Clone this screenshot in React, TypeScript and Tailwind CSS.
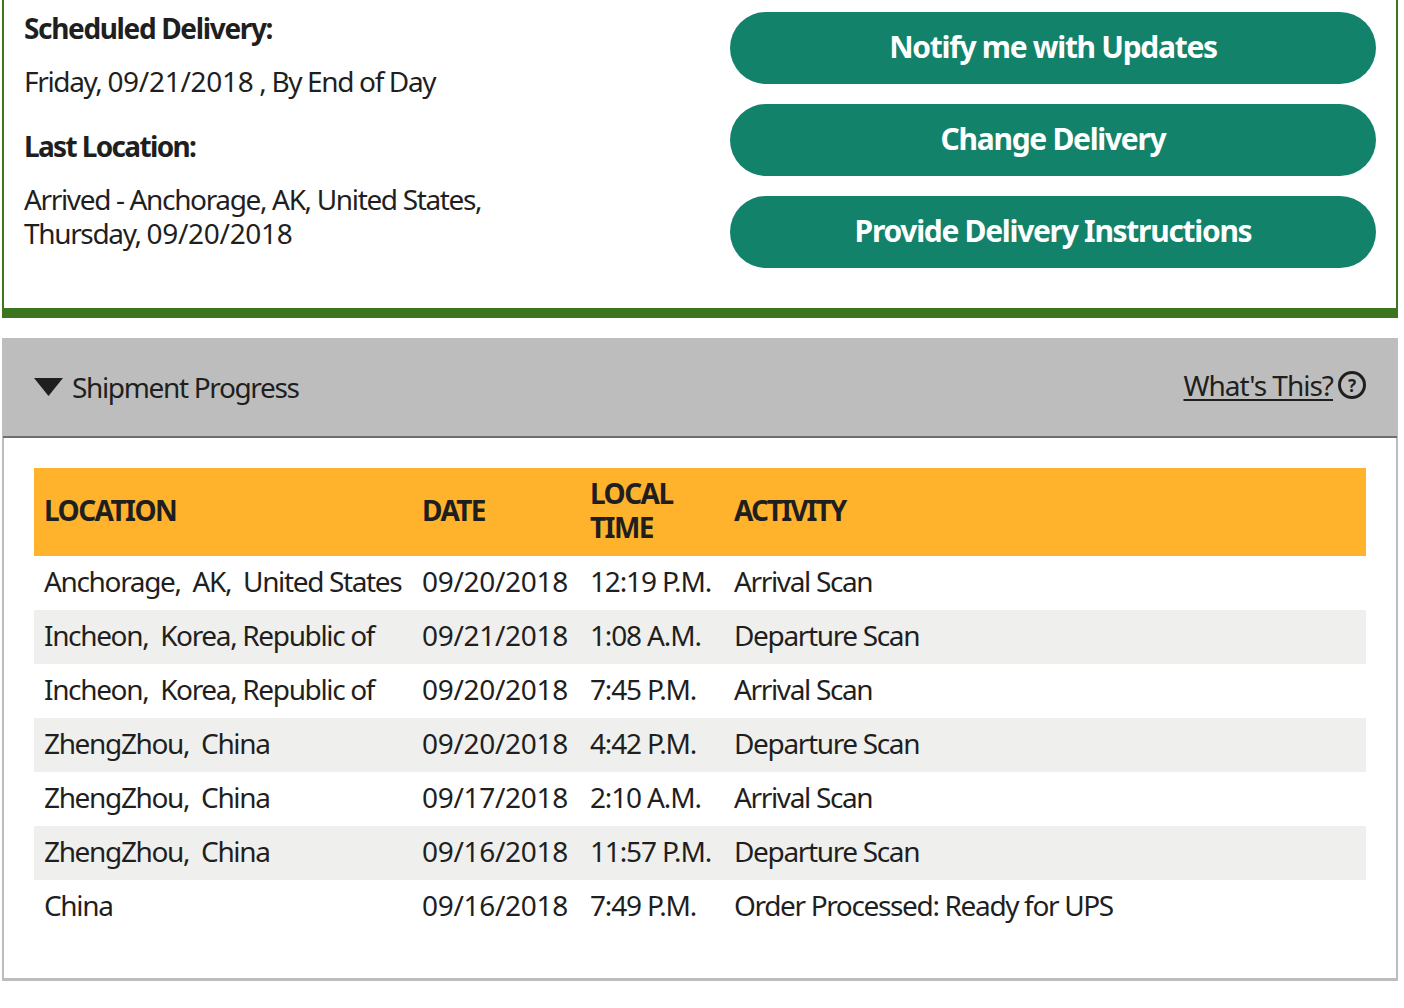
// App.tsx
const rows = [
  ['Anchorage,  AK,  United States', '09/20/2018', '12:19 P.M.', 'Arrival Scan'],
  ['Incheon,  Korea, Republic of', '09/21/2018', '1:08 A.M.', 'Departure Scan'],
  ['Incheon,  Korea, Republic of', '09/20/2018', '7:45 P.M.', 'Arrival Scan'],
  ['ZhengZhou,  China', '09/20/2018', '4:42 P.M.', 'Departure Scan'],
  ['ZhengZhou,  China', '09/17/2018', '2:10 A.M.', 'Arrival Scan'],
  ['ZhengZhou,  China', '09/16/2018', '11:57 P.M.', 'Departure Scan'],
  ['China', '09/16/2018', '7:49 P.M.', 'Order Processed: Ready for UPS'],
]

const buttons = ['Notify me with Updates', 'Change Delivery', 'Provide Delivery Instructions']

export default function App() {
  return (
    <div className="w-[1404px] h-[1008px] overflow-hidden bg-white pl-[2px] font-['Noto_Sans',sans-serif] text-[28px] leading-[34px] tracking-[-1.35px] text-[#1f1f1f]">
      {/* delivery box */}
      <div className="w-[1396px] h-[318px] border-x-2 border-b-[10px] border-[#3b761f] flex pl-[20px] pr-[20px]">
        <div className="w-[706px] pt-[11px]">
          <div className="font-bold">Scheduled Delivery:</div>
          <div className="mt-[19px]">Friday, <span className="tracking-[-0.3px]">09/21/2018</span> , By End of Day</div>
          <div className="mt-[31px] font-bold tracking-[-1.65px]">Last Location:</div>
          <div className="mt-[19px]">
            Arrived - Anchorage, AK, United States,
            <br />
            Thursday, <span className="tracking-[-0.3px]">09/20/2018</span>
          </div>
        </div>
        <div className="flex-1 flex flex-col gap-[20px] pt-[12px]">
          {buttons.map(b => (
            <button key={b} className="h-[72px] pb-[2px] rounded-full bg-[#12826a] text-white font-bold text-[30px] tracking-[-1.3px]">
              {b}
            </button>
          ))}
        </div>
      </div>

      {/* shipment progress */}
      <div className="mt-[20px] w-[1396px] h-[643px] border-x-[2px] border-b-[3px] border-[#bdbdbd]">
        <div className="h-[100px] bg-[#bdbdbd] -mx-[2px] flex flex-col">
          <div className="h-[98px] pl-[32px] pr-[32px] flex items-center justify-between">
            <div className="flex items-center gap-[9px]">
              <svg width="29" height="18" viewBox="0 0 29 18"><path d="M0 0h29L14.5 18z" fill="#1f1f1f" /></svg>
              <span>Shipment Progress</span>
            </div>
            <div className="flex items-center gap-[5px] -mt-[4px]">
              <span className="underline underline-offset-[3px] tracking-[-1px]">What's This?</span>
              <span className="w-[28px] h-[28px] rounded-full border-[3px] border-[#1f1f1f] flex items-center justify-center text-[17px] leading-none font-bold tracking-normal">?</span>
            </div>
          </div>
          <div className="h-[2px] mx-[1px] bg-[#6e6e6e]" />
        </div>

        <div className="pt-[30px] pl-[30px]">
          <table className="w-[1332px] table-fixed border-collapse">
            <colgroup>
              <col className="w-[378px]" />
              <col className="w-[168px]" />
              <col className="w-[144px]" />
              <col />
            </colgroup>
            <thead>
              <tr className="h-[88px] bg-[#ffb32c] font-bold text-left tracking-[-1.55px]">
                <th className="px-[10px] pb-[4px]">LOCATION</th>
                <th className="px-[10px] pb-[4px]">DATE</th>
                <th className="px-[10px] pb-[4px]">LOCAL<br />TIME</th>
                <th className="px-[10px] pb-[4px] tracking-[-1.9px]">ACTIVITY</th>
              </tr>
            </thead>
            <tbody>
              {rows.map((r, i) => (
                <tr key={i} className={`h-[54px] ${i % 2 === 1 ? 'bg-[#efefed]' : 'bg-white'}`}>
                  <td className="px-[10px] pb-[4px] whitespace-pre">{r[0]}</td>
                  <td className="px-[10px] pb-[4px] whitespace-pre tracking-[-0.3px]">{r[1]}</td>
                  <td className="px-[10px] pb-[4px] whitespace-pre tracking-[-1.15px]">{r[2]}</td>
                  <td className="px-[10px] pb-[4px] whitespace-pre">{r[3]}</td>
                </tr>
              ))}
            </tbody>
          </table>
        </div>
      </div>
    </div>
  )
}
